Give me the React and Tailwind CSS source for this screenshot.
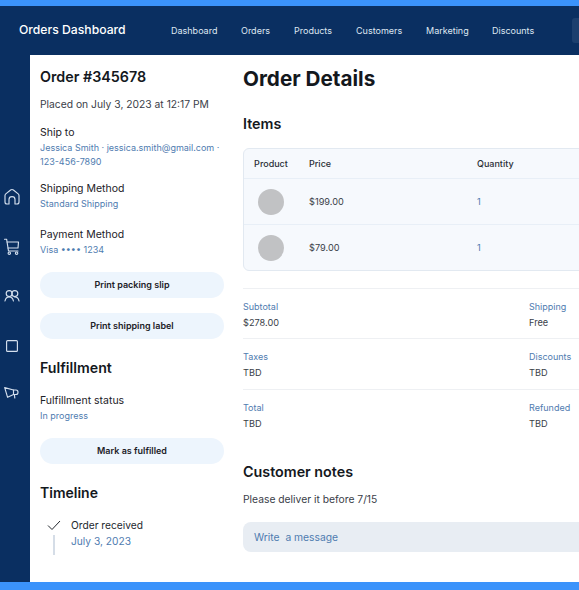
import React from "react";

const nav = [
  ["Dashboard", "w-[70px]"],
  ["Orders", "w-[53px]"],
  ["Products", "w-[62px]"],
  ["Customers", "w-[70px]"],
  ["Marketing", "w-[66px]"],
  ["Discounts", "w-[60px]"],
];

function Field({ label, value, className = "" }) {
  return (
    <div className={className}>
      <div className="text-[10.5px] leading-[16px] text-[#1c2127]">{label}</div>
      <div className="text-[9px] leading-[14px] text-[#4f7cb0]">{value}</div>
    </div>
  );
}

function Pill({ children, className = "" }) {
  return (
    <div className={`h-[26px] rounded-full bg-[#edf5fd] flex items-center justify-center text-[9px] font-semibold text-[#1c2127] ${className}`}>
      {children}
    </div>
  );
}

function Stat({ label, value }) {
  return (
    <div>
      <div className="text-[9px] leading-[14px] text-[#4f7cb0]">{label}</div>
      <div className="mt-[2px] text-[9.2px] leading-[14px] text-[#3a4048]">{value}</div>
    </div>
  );
}

function StatRow({ a, b, c, d, className = "" }) {
  return (
    <div className={`grid grid-cols-[286px_1fr] border-t border-[#eef0f3] ${className}`}>
      <Stat label={a} value={b} />
      <Stat label={c} value={d} />
    </div>
  );
}

function Item({ price, last }) {
  return (
    <div className={`flex items-center ${last ? "h-[45px]" : "h-[46px] border-b border-[#e8eff7]"}`}>
      <div className="w-[54px] mr-[11px] flex justify-center">
        <div className="w-[26px] h-[26px] rounded-full bg-[#c1c2c4]" />
      </div>
      <div className="w-[168px] text-[9.2px] text-[#3a4048]">{price}</div>
      <div className="text-[9.2px] text-[#4f7cb0]">1</div>
    </div>
  );
}

const iconProps = {
  fill: "none",
  stroke: "#d5e0ee",
  strokeWidth: 1.15,
  strokeLinecap: "round",
  strokeLinejoin: "round",
};

function Sidebar() {
  return (
    <div className="w-[30px] shrink-0 flex flex-col items-center pt-[133px] pr-[6px]">
      <svg width="18" height="18" viewBox="0 0 18 18" {...iconProps}>
        <path d="M2 7.5 C2 6.8 2.3 6.3 2.8 5.9 L7.6 2 C8.5 1.4 9.5 1.4 10.4 2 L15.2 5.9 C15.7 6.3 16 6.8 16 7.5 V14 C16 15.3 15.2 16 14 16 H12 V11.5 C12 9.8 10.7 8.6 9 8.6 C7.3 8.6 6 9.8 6 11.5 V16 H4 C2.8 16 2 15.3 2 14 Z" />
      </svg>
      <svg className="mt-[32px]" width="18" height="18" viewBox="0 0 18 18" {...iconProps}>
        <path d="M1.5 1.2 H3.6 L5.5 13 H15" />
        <path d="M4.2 4 H15.5 L15 10 H5" />
        <circle cx="6.3" cy="15.2" r="1.2" />
        <circle cx="13.6" cy="15.2" r="1.2" />
      </svg>
      <svg className="mt-[33px]" width="16" height="14" viewBox="0 0 16 14" {...iconProps}>
        <circle cx="5.2" cy="4.6" r="3" />
        <circle cx="10.8" cy="4.6" r="3" />
        <path d="M1 12 C1.4 9.6 3 8 5.2 8 C7.4 8 9 9.6 9.4 12" />
        <path d="M10.8 8 C13 8 14.6 9.6 15 12" />
      </svg>
      <svg className="mt-[36px]" width="14" height="14" viewBox="0 0 14 14" {...iconProps}>
        <rect x="1.6" y="1.6" width="10.8" height="10.8" rx="1" />
      </svg>
      <svg className="mt-[33px]" width="16" height="14" viewBox="0 0 16 14" {...iconProps}>
        <path d="M0.7 1.6 L9.5 4 H12 C13.3 4 14 5 14 6.2 C14 7.5 13.2 8.5 12 8.5 H9.5 L3.6 11.3 Z" />
        <path d="M9.5 4 V8.5" />
        <path d="M10.4 8.5 L10.8 12" />
      </svg>
    </div>
  );
}

function LeftColumn() {
  return (
    <div className="w-[184px] shrink-0 ml-[10px] pt-[12px]">
      <h2 className="text-[14.3px] leading-[20px] font-semibold text-[#14181d]">Order #345678</h2>
      <p className="mt-[9px] text-[10.3px] leading-[16px] text-[#3a4048]">Placed on July 3, 2023 at 12:17 PM</p>
      <div className="mt-[13px]">
        <div className="text-[10.5px] leading-[16px] text-[#1c2127]">Ship to</div>
        <div className="text-[9px] leading-[14px] text-[#4f7cb0]">
          Jessica Smith · jessica.smith@gmail.com ·<br />123-456-7890
        </div>
      </div>
      <Field className="mt-[12px]" label="Shipping Method" value="Standard Shipping" />
      <Field className="mt-[16px]" label="Payment Method" value="Visa •••• 1234" />
      <Pill className="mt-[15px]">Print packing slip</Pill>
      <Pill className="mt-[15px]">Print shipping label</Pill>
      <h3 className="mt-[19px] text-[14.2px] leading-[20px] font-semibold text-[#14181d]">Fulfillment</h3>
      <Field className="mt-[15px]" label="Fulfillment status" value="In progress" />
      <Pill className="mt-[15px]">Mark as fulfilled</Pill>
      <h3 className="mt-[19px] text-[14px] leading-[20px] font-semibold text-[#14181d]">Timeline</h3>
      <div className="mt-[15px] flex">
        <div className="w-[31px] flex flex-col items-center pl-[3px] pr-[6px] shrink-0">
          <svg className="mt-[2px]" width="14" height="11" viewBox="0 0 14 11" fill="none" stroke="#23282e" strokeWidth="1">
            <path d="M1 5.5 L5 9.5 L13 1" />
          </svg>
          <div className="mt-[4px] w-[1.5px] h-[20px] bg-[#d5dde7]" />
        </div>
        <div>
          <div className="text-[10.2px] leading-[15px] text-[#23282e]">Order received</div>
          <div className="mt-[1px] text-[10.2px] leading-[15px] text-[#4f7cb0]">July 3, 2023</div>
        </div>
      </div>
    </div>
  );
}

function RightColumn() {
  return (
    <div className="w-[400px] shrink-0 ml-[19px] pt-[10px]">
      <h1 className="text-[20.7px] leading-[28px] font-bold text-[#14181d]">Order Details</h1>
      <h3 className="mt-[21px] text-[14.3px] leading-[20px] font-semibold text-[#14181d]">Items</h3>
      <div className="mt-[14px] rounded-[6px] border border-[#e2e9f1] bg-[#f6f9fd]">
        <div className="h-[30px] flex items-center border-b border-[#e8eff7] text-[9px] font-medium text-[#2a2f36]">
          <div className="w-[54px] mr-[11px] text-center">Product</div>
          <div className="w-[168px]">Price</div>
          <div>Quantity</div>
        </div>
        <Item price="$199.00" />
        <Item price="$79.00" last />
      </div>
      <StatRow className="mt-[17px] pt-[11px] pb-[8px]" a="Subtotal" b="$278.00" c="Shipping" d="Free" />
      <StatRow className="pt-[11px] pb-[9px]" a="Taxes" b="TBD" c="Discounts" d="TBD" />
      <StatRow className="pt-[11px]" a="Total" b="TBD" c="Refunded" d="TBD" />
      <h3 className="mt-[31px] text-[14.3px] leading-[20px] font-semibold text-[#14181d]">Customer notes</h3>
      <p className="mt-[9px] text-[10.3px] leading-[16px] text-[#3a4048]">Please deliver it before 7/15</p>
      <div className="mt-[15px] h-[30px] rounded-[8px] bg-[#e8edf3] flex items-center pl-[11px] pt-[1px] text-[10.3px] text-[#4f7cb0] whitespace-pre">
        Write  a message
      </div>
    </div>
  );
}

export default function App() {
  return (
    <div className="w-[579px] h-[590px] overflow-hidden flex flex-col bg-[#0a2f61] font-['Inter',sans-serif]">
      <div className="h-[6px] shrink-0 bg-[#3b93fb]" />
      <header className="h-[49px] shrink-0 flex items-center">
        <div className="w-[171px] shrink-0 pl-[19px] text-[12.2px] font-medium text-white">Orders Dashboard</div>
        {nav.map(([n, w]) => (
          <div key={n} className={`${w} shrink-0 text-[9px] text-[#dfe7f1]`}>{n}</div>
        ))}
        <div className="ml-[20px] w-[20px] h-[25px] rounded-[3px] bg-[#1c3f6e] shrink-0" />
      </header>
      <div className="flex-1 flex min-h-0">
        <Sidebar />
        <main className="flex-1 flex bg-white overflow-hidden">
          <LeftColumn />
          <RightColumn />
        </main>
      </div>
      <div className="h-[8px] shrink-0 bg-[#3b93fb]" />
    </div>
  );
}
